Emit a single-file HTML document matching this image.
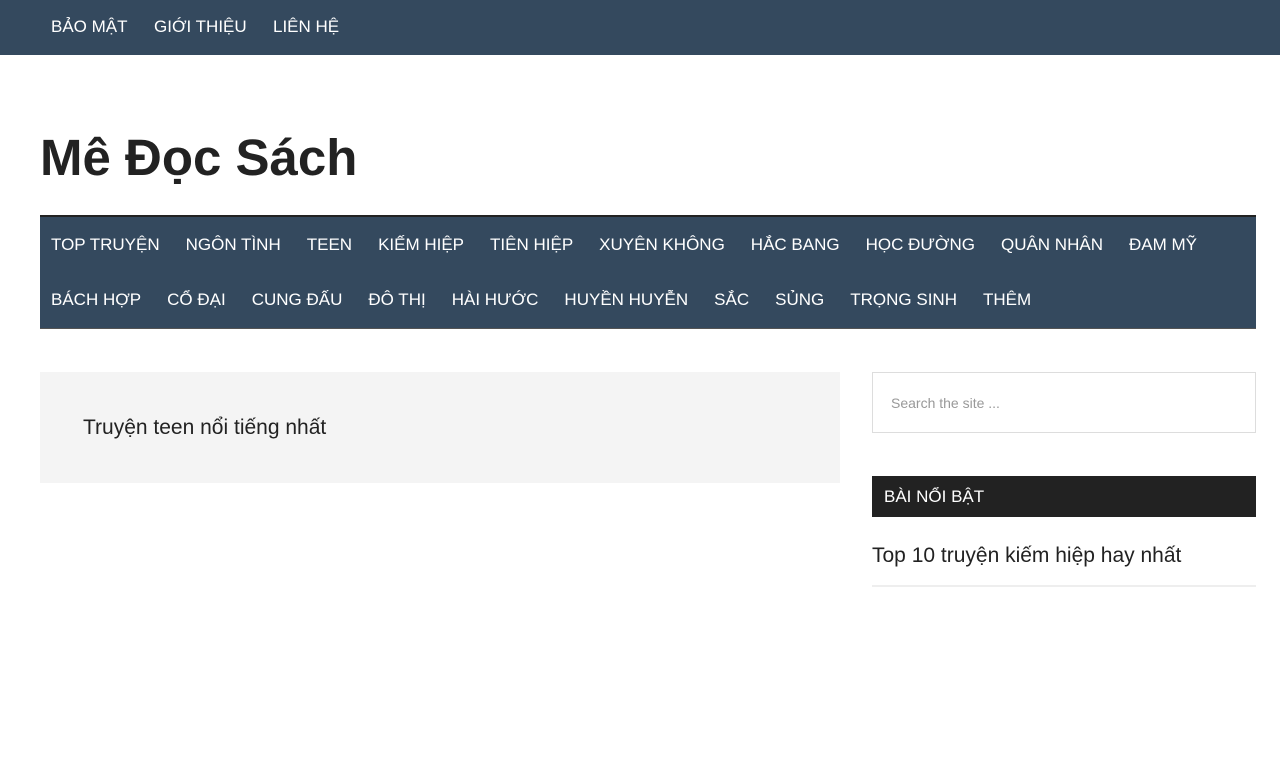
<!DOCTYPE html>
<html><head><meta charset="utf-8"><style>
*{margin:0;padding:0;box-sizing:border-box}
body{width:1280px;height:768px;background:#fff;font-family:"Liberation Sans",sans-serif;color:#222;position:relative;overflow:hidden}
.top{position:absolute;left:0;top:0;width:1280px;height:55px;background:#34495e}
.top span{position:absolute;top:17px;font-size:17px;color:#fff;line-height:20px}
h1{position:absolute;left:40px;top:127px;font-size:51px;font-weight:bold;line-height:62px;color:#222}
.nav{position:absolute;left:40px;top:215px;width:1216px;height:114px;background:#34495e;border-top:2px solid #222;border-bottom:1px solid #555}
.row{position:absolute;left:11px;display:flex;gap:26px;font-size:17px;color:#fff;line-height:20px;white-space:nowrap}
.content{position:absolute;left:40px;top:372px;width:800px;height:111px;background:#f4f4f4}
.content p{position:absolute;left:43px;top:44px;font-size:21px;line-height:24px;color:#222}
.search{position:absolute;left:872px;top:372px;width:384px;height:61px;border:1px solid #ddd;font-size:14px;color:#999;padding:22px 0 0 18px}
.wt{position:absolute;left:872px;top:476px;width:384px;height:41px;background:#222;color:#fff;font-size:17px;padding:11px 0 0 12px}
.link{position:absolute;left:872px;top:544px;width:384px;height:43px;border-bottom:2px solid #eee;font-size:21px;line-height:24px;color:#222}
</style></head><body>
<div class="top"><span style="left:51px">BẢO MẬT</span><span style="left:154px">GIỚI THIỆU</span><span style="left:273px">LIÊN HỆ</span></div>
<h1>Mê Đọc Sách</h1>
<div class="nav">
<div class="row" style="top:18px"><span>TOP TRUYỆN</span><span>NGÔN TÌNH</span><span>TEEN</span><span>KIẾM HIỆP</span><span>TIÊN HIỆP</span><span>XUYÊN KHÔNG</span><span>HẮC BANG</span><span>HỌC ĐƯỜNG</span><span>QUÂN NHÂN</span><span>ĐAM MỸ</span></div>
<div class="row" style="top:73px"><span>BÁCH HỢP</span><span>CỔ ĐẠI</span><span>CUNG ĐẤU</span><span>ĐÔ THỊ</span><span>HÀI HƯỚC</span><span>HUYỀN HUYỄN</span><span>SẮC</span><span>SỦNG</span><span>TRỌNG SINH</span><span>THÊM</span></div>
</div>
<div class="content"><p>Truyện teen nổi tiếng nhất</p></div>
<div class="search">Search the site ...</div>
<div class="wt">BÀI NỔI BẬT</div>
<div class="link">Top 10 truyện kiếm hiệp hay nhất</div>
</body></html>
